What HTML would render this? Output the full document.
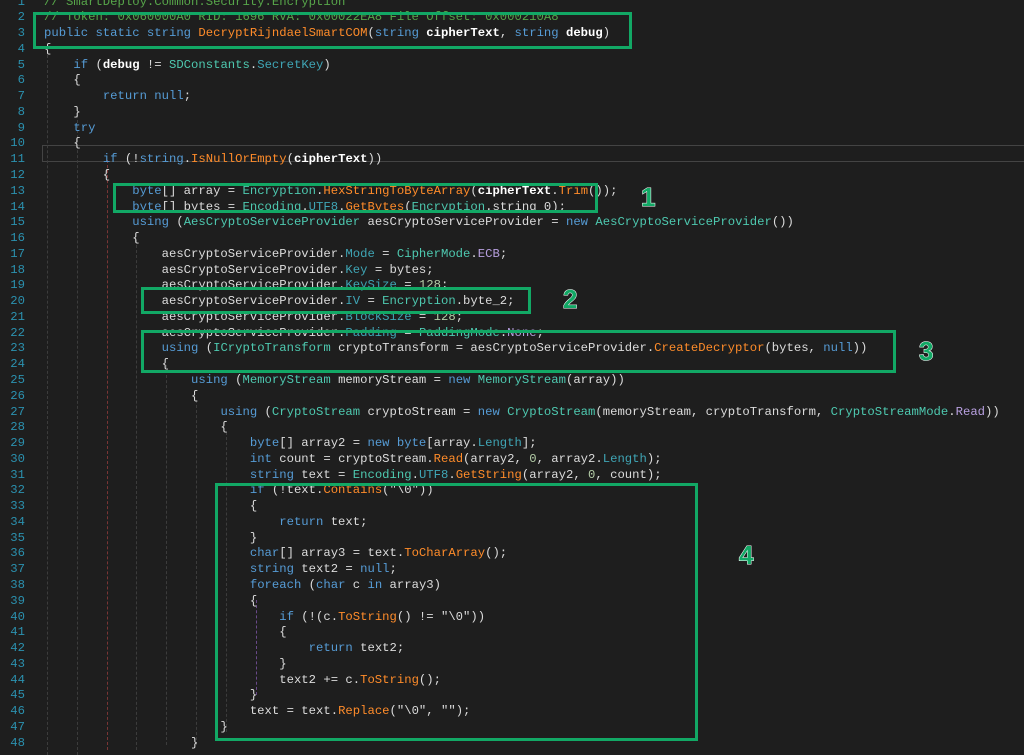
<!DOCTYPE html>
<html><head><meta charset="utf-8"><style>
body{margin:0;width:1024px;height:744px;background:#1e1e1e;overflow:hidden;position:relative;font-family:"Liberation Mono",monospace;font-size:12.25px;color:#dcdcdc}
.ln{position:absolute;left:0;width:25px;text-align:right;color:#2b91af}
.l{position:absolute;left:44px;white-space:pre}
.k{color:#569cd6}.t{color:#4ec9b0}.m{color:#ff8c2a}.p{color:#3fa5b5}.e{color:#b8a0e0}.b{font-weight:bold;color:#fff}.c{color:#57a64a}.n{color:#b5cea8}
.box{position:absolute;border:3px solid #12a865;box-sizing:border-box}
.num{position:absolute;font-family:"Liberation Sans",sans-serif;font-weight:bold;font-size:26px;color:#12a865;-webkit-text-stroke:1px #fff;paint-order:stroke}
.g{position:absolute;width:0;border-left:1px dashed #3c3c3c}
.cur{position:absolute;left:42px;top:145px;width:990px;height:17px;border:1px solid #444;box-sizing:border-box}
</style></head><body>
<div class="cur"></div>
<div class="g" style="left:47px;top:55px;height:700px"></div>
<div class="g" style="left:77px;top:115px;height:640px"></div>
<div class="g" style="left:107px;top:160px;height:590px;border-color:#7a3535"></div>
<div class="g" style="left:136px;top:240px;height:510px"></div>
<div class="g" style="left:166px;top:365px;height:380px"></div>
<div class="g" style="left:196px;top:400px;height:345px"></div>
<div class="g" style="left:226px;top:432px;height:300px"></div>
<div class="g" style="left:256px;top:600px;height:95px;border-color:#6a4a8a"></div>
<div id="code"></div>
<script>
var L=[
'<span class="c">// SmartDeploy.Common.Security.Encryption</span>',
'<span class="c">// Token: 0x060000A0 RID: 1696 RVA: 0x00022EA8 File Offset: 0x000210A8</span>',
'<span class="k">public static string</span> <span class="m">DecryptRijndaelSmartCOM</span>(<span class="k">string</span> <span class="b">cipherText</span>, <span class="k">string</span> <span class="b">debug</span>)',
'{',
'    <span class="k">if</span> (<span class="b">debug</span> != <span class="t">SDConstants</span>.<span class="p">SecretKey</span>)',
'    {',
'        <span class="k">return null</span>;',
'    }',
'    <span class="k">try</span>',
'    {',
'        <span class="k">if</span> (!<span class="k">string</span>.<span class="m">IsNullOrEmpty</span>(<span class="b">cipherText</span>))',
'        {',
'            <span class="k">byte</span>[] array = <span class="t">Encryption</span>.<span class="m">HexStringToByteArray</span>(<span class="b">cipherText</span>.<span class="m">Trim</span>());',
'            <span class="k">byte</span>[] bytes = <span class="t">Encoding</span>.<span class="p">UTF8</span>.<span class="m">GetBytes</span>(<span class="t">Encryption</span>.string_0);',
'            <span class="k">using</span> (<span class="t">AesCryptoServiceProvider</span> aesCryptoServiceProvider = <span class="k">new</span> <span class="t">AesCryptoServiceProvider</span>())',
'            {',
'                aesCryptoServiceProvider.<span class="p">Mode</span> = <span class="t">CipherMode</span>.<span class="e">ECB</span>;',
'                aesCryptoServiceProvider.<span class="p">Key</span> = bytes;',
'                aesCryptoServiceProvider.<span class="p">KeySize</span> = <span class="n">128</span>;',
'                aesCryptoServiceProvider.<span class="p">IV</span> = <span class="t">Encryption</span>.byte_2;',
'                aesCryptoServiceProvider.<span class="p">BlockSize</span> = <span class="n">128</span>;',
'                aesCryptoServiceProvider.<span class="p">Padding</span> = <span class="t">PaddingMode</span>.<span class="e">None</span>;',
'                <span class="k">using</span> (<span class="t">ICryptoTransform</span> cryptoTransform = aesCryptoServiceProvider.<span class="m">CreateDecryptor</span>(bytes, <span class="k">null</span>))',
'                {',
'                    <span class="k">using</span> (<span class="t">MemoryStream</span> memoryStream = <span class="k">new</span> <span class="t">MemoryStream</span>(array))',
'                    {',
'                        <span class="k">using</span> (<span class="t">CryptoStream</span> cryptoStream = <span class="k">new</span> <span class="t">CryptoStream</span>(memoryStream, cryptoTransform, <span class="t">CryptoStreamMode</span>.<span class="e">Read</span>))',
'                        {',
'                            <span class="k">byte</span>[] array2 = <span class="k">new byte</span>[array.<span class="p">Length</span>];',
'                            <span class="k">int</span> count = cryptoStream.<span class="m">Read</span>(array2, <span class="n">0</span>, array2.<span class="p">Length</span>);',
'                            <span class="k">string</span> text = <span class="t">Encoding</span>.<span class="p">UTF8</span>.<span class="m">GetString</span>(array2, <span class="n">0</span>, count);',
'                            <span class="k">if</span> (!text.<span class="m">Contains</span>("\\0"))',
'                            {',
'                                <span class="k">return</span> text;',
'                            }',
'                            <span class="k">char</span>[] array3 = text.<span class="m">ToCharArray</span>();',
'                            <span class="k">string</span> text2 = <span class="k">null</span>;',
'                            <span class="k">foreach</span> (<span class="k">char</span> c <span class="k">in</span> array3)',
'                            {',
'                                <span class="k">if</span> (!(c.<span class="m">ToString</span>() != "\\0"))',
'                                {',
'                                    <span class="k">return</span> text2;',
'                                }',
'                                text2 += c.<span class="m">ToString</span>();',
'                            }',
'                            text = text.<span class="m">Replace</span>("\\0", "");',
'                        }',
'                    }'
];
var h='';
for(var i=0;i<L.length;i++){var y=-5.5+i*15.77;
h+='<div class="ln" style="top:'+y+'px">'+(i+1)+'</div><div class="l" style="top:'+y+'px">'+L[i]+'</div>';}
document.getElementById('code').innerHTML=h;
</script>
<div class="box" style="left:33px;top:12px;width:599px;height:37px"></div>
<div class="box" style="left:113px;top:183px;width:485px;height:30px"></div>
<div class="box" style="left:141px;top:287px;width:390px;height:27px"></div>
<div class="box" style="left:141px;top:330px;width:755px;height:43px"></div>
<div class="box" style="left:215px;top:483px;width:483px;height:258px"></div>
<div class="num" style="left:641px;top:182px">1</div>
<div class="num" style="left:563px;top:284px">2</div>
<div class="num" style="left:919px;top:336px">3</div>
<div class="num" style="left:739px;top:540px">4</div>
</body></html>
